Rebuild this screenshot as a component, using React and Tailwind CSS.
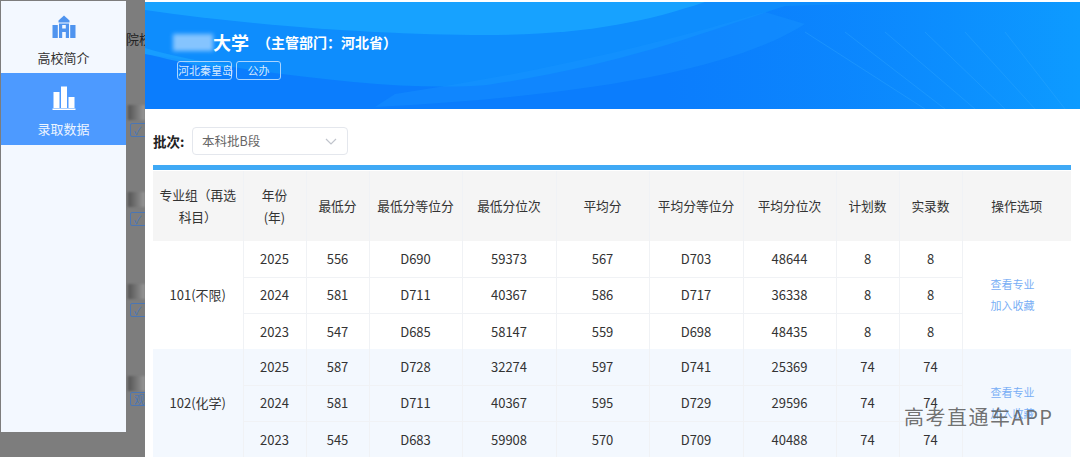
const GROUPS = [
  {
    name: "101(不限)",
    rows: [
      ["2025", "556", "D690", "59373", "567", "D703", "48644", "8", "8"],
      ["2024", "581", "D711", "40367", "586", "D717", "36338", "8", "8"],
      ["2023", "547", "D685", "58147", "559", "D698", "48435", "8", "8"],
    ],
  },
  {
    name: "102(化学)",
    rows: [
      ["2025", "587", "D728", "32274", "597", "D741", "25369", "74", "74"],
      ["2024", "581", "D711", "40367", "595", "D729", "29596", "74", "74"],
      ["2023", "545", "D683", "59908", "570", "D709", "40488", "74", "74"],
    ],
  },
];

const HEADERS = ["年份\n(年)", "最低分", "最低分等位分", "最低分位次", "平均分", "平均分等位分", "平均分位次", "计划数", "实录数"];
const COL_WIDTHS = ["w-[90px]", "w-[63px]", "w-[63px]", "w-[93px]", "w-[94px]", "w-[93px]", "w-[94px]", "w-[93px]", "w-[63px]", "w-[63px]", "w-[109px]"];

const SchoolIcon = () => (
  <svg width="24" height="24" viewBox="0 0 24 24" fill="#4f94ef">
    <path d="M12 0.5 L17.5 5.5 V7.5 H6.5 V5.5 Z" />
    <path d="M7 8.5 H17 V23 H13.8 V17 H10.2 V23 H7 Z M10.2 10 V13.5 H13.8 V10 Z" fillRule="evenodd" />
    <path d="M0.5 10 H5.8 V23 H0.5 Z M18.2 10 H23.5 V23 H18.2 Z" />
  </svg>
);

const ChartIcon = () => (
  <svg width="24" height="24" viewBox="0 0 24 24" fill="#ffffff">
    <rect x="1.5" y="6" width="6" height="16" />
    <rect x="9" y="0.5" width="6" height="21.5" />
    <rect x="16.5" y="11" width="6" height="11" />
    <rect x="0.5" y="22.5" width="23" height="1.5" />
  </svg>
);

const HeaderWaves = () => (
  <svg className="absolute inset-0 w-full h-full" viewBox="0 0 935 107" preserveAspectRatio="none">
    <defs>
      <linearGradient id="right" x1="0" y1="0" x2="1" y2="0">
        <stop offset="0" stopColor="#0c8cfd" stopOpacity="0" />
        <stop offset="1" stopColor="#0d9bff" />
      </linearGradient>
    </defs>
    <rect width="935" height="107" fill="#0b7dfd" />
    <rect x="520" width="415" height="107" fill="url(#right)" />
    {/* mid-tone wave */}
    <path d="M0 0 H780 L640 4 C560 30 480 62 342 83 C250 90 130 72 0 52 Z" fill="#0e8dfd" />
    {/* top light wave */}
    <path d="M0 0 H560 C500 20 440 33 340 33 C240 33 110 24 0 8 Z" fill="#17a2ff" />
    {/* hatched band */}
    <path d="M250 92 C400 70 520 40 620 10 L660 22 C600 60 480 92 230 105 Z" fill="#1a98ff" opacity="0.35" />
    <path d="M0 46 C30 55 60 60 90 64 L70 66 C40 62 20 56 0 52 Z" fill="#1ba4ff" opacity="0.7" />
    <g stroke="#35abfd" strokeWidth="1" opacity="0.35">
      <path d="M660 30 L780 107" />
      <path d="M700 30 L800 107" />
      <path d="M740 30 L830 107" />
      <path d="M780 30 L860 107" />
      <path d="M820 30 L890 107" />
      <path d="M860 30 L920 107" />
    </g>
  </svg>
);

const BgFragment = ({ children, top }) => (
  <div className={`absolute left-0 whitespace-nowrap text-[13px] text-[#222] ${top}`}>{children}</div>
);

const Smudge = ({ top }) => (
  <div className={`absolute left-[2px] w-[17px] h-[15px] bg-gradient-to-r from-[#555] to-[#999] blur-[1px] ${top}`} />
);

const TagFrag = ({ top, children }) => (
  <div className={`absolute left-[4px] w-[30px] h-[14px] border border-[#4a76b5] rounded-[2px] text-[11px] leading-[12px] text-[#4a76b5] pl-[3px] ${top}`}>
    {children}
  </div>
);

export default function App() {
  return (
    <div
      className="w-[1080px] h-[457px] overflow-hidden flex bg-[#7d7d7d] pt-[1px] pl-[1px] text-[13px] text-[#333]"
      style={{ fontFamily: '"Noto Sans CJK SC", "Noto Sans", sans-serif' }}
    >
      {/* Side tabs */}
      <div className="w-[125px] h-[431px] shrink-0 bg-[#f3f8ff]">
        <div className="h-[72px] bg-[#f3f8ff] flex flex-col items-center pt-[14px]">
          <SchoolIcon />
          <span className="mt-[9px] leading-[20px] text-[#333]">高校简介</span>
        </div>
        <div className="h-[72px] bg-[#4d9aff] flex flex-col items-center pt-[13px]">
          <ChartIcon />
          <span className="mt-[9px] leading-[20px] text-white/90">录取数据</span>
        </div>
      </div>

      {/* Page behind the drawer */}
      <div className="w-[19px] shrink-0 relative overflow-hidden">
        <BgFragment top="top-[28px]">院校</BgFragment>
        <Smudge top="top-[104px]" />
        <TagFrag top="top-[122px]">✓</TagFrag>
        <Smudge top="top-[191px]" />
        <TagFrag top="top-[211px]">✓</TagFrag>
        <Smudge top="top-[283px]" />
        <TagFrag top="top-[302px]">✓</TagFrag>
        <Smudge top="top-[375px]" />
        <TagFrag top="top-[391px]">观</TagFrag>
      </div>

      {/* Drawer */}
      <div className="flex-1 min-w-0 bg-white -mt-[1px] pt-[2px] flex flex-col">
        <div className="relative h-[107px] shrink-0 overflow-hidden">
          <HeaderWaves />
          <div className="relative pl-[32px] pt-[29px] text-white">
            <div className="flex items-center h-[22px]">
              <div className="w-[40px] h-[17px] bg-[#b8dcff] opacity-70 blur-[2px] -ml-[4px]" />
              <span className="text-[18px] font-bold leading-[22px]">大学</span>
              <span className="text-[14px] font-bold leading-[22px] ml-[8px]">（主管部门：河北省）</span>
            </div>
            <div className="flex gap-[4px] mt-[8px]">
              <span className="w-[55px] h-[19px] border border-[#a9d4ff] rounded-[3px] text-[11px] leading-[17px] text-center whitespace-nowrap text-[#d5eaff]">河北秦皇岛</span>
              <span className="w-[45px] h-[19px] border border-[#a9d4ff] rounded-[3px] text-[11px] leading-[17px] text-center text-[#d5eaff]">公办</span>
            </div>
          </div>
        </div>

        <div className="pl-[8px] pr-[9px]">
          <div className="flex items-center h-[28px] mt-[18px]">
            <span className="w-[39px] text-[13.5px] font-bold text-[#222]">批次:</span>
            <div className="w-[156px] h-[28px] border border-[#e4e7ed] rounded-[4px] pl-[9px] pr-[10px] flex items-center justify-between text-[#666] text-[12.5px]">
              <span>本科批B段</span>
              <svg width="12" height="7" viewBox="0 0 12 7" fill="none" stroke="#c0c4cc" strokeWidth="1.2">
                <path d="M1 1 L6 6 L11 1" />
              </svg>
            </div>
          </div>

          <div className="h-[5px] w-[918px] mt-[10px] bg-[#3fa9f5]" />
          <table className="table-fixed border-collapse w-[918px] mt-[1px]">
            <colgroup>
              {COL_WIDTHS.map((w, i) => (
                <col key={i} className={w} />
              ))}
            </colgroup>
            <thead>
              <tr className="h-[70px] bg-[#f5f5f5] text-[12.75px]">
                <th className="font-normal leading-[22px] px-[4px] border-r border-[#f0f2f5]">专业组（再选科目）</th>
                {HEADERS.map((h) => (
                  <th key={h} className="font-normal leading-[22px] border-r border-[#f0f2f5] whitespace-pre-line">{h}</th>
                ))}
                <th className="font-normal">操作选项</th>
              </tr>
            </thead>
            <tbody>
              {GROUPS.map((group, g) =>
                group.rows.map((row, i) => (
                  <tr key={row[0]} className={`h-[36px] ${g === 1 ? "bg-[#f3f8fe]" : "bg-white"}`}>
                    {i === 0 && (
                      <td rowSpan={3} className="text-center border-r border-[#f0f2f5]">{group.name}</td>
                    )}
                    {row.map((cell, c) => (
                      <td key={c} className={`text-center border-r border-[#f0f2f5] ${i < 2 ? "border-b" : ""}`}>{cell}</td>
                    ))}
                    {i === 0 && (
                      <td rowSpan={3} className="pl-[28px] text-[11px] text-[#78aef5] leading-[21px]">
                        <div>查看专业</div>
                        <div>加入收藏</div>
                      </td>
                    )}
                  </tr>
                ))
              )}
            </tbody>
          </table>
        </div>
      </div>

      {/* Watermark */}
      <div className="absolute left-[904px] top-[404px] text-[20px] leading-[26px] tracking-[1.5px] text-[#5f5f5f]/90">高考直通车APP</div>
    </div>
  );
}
